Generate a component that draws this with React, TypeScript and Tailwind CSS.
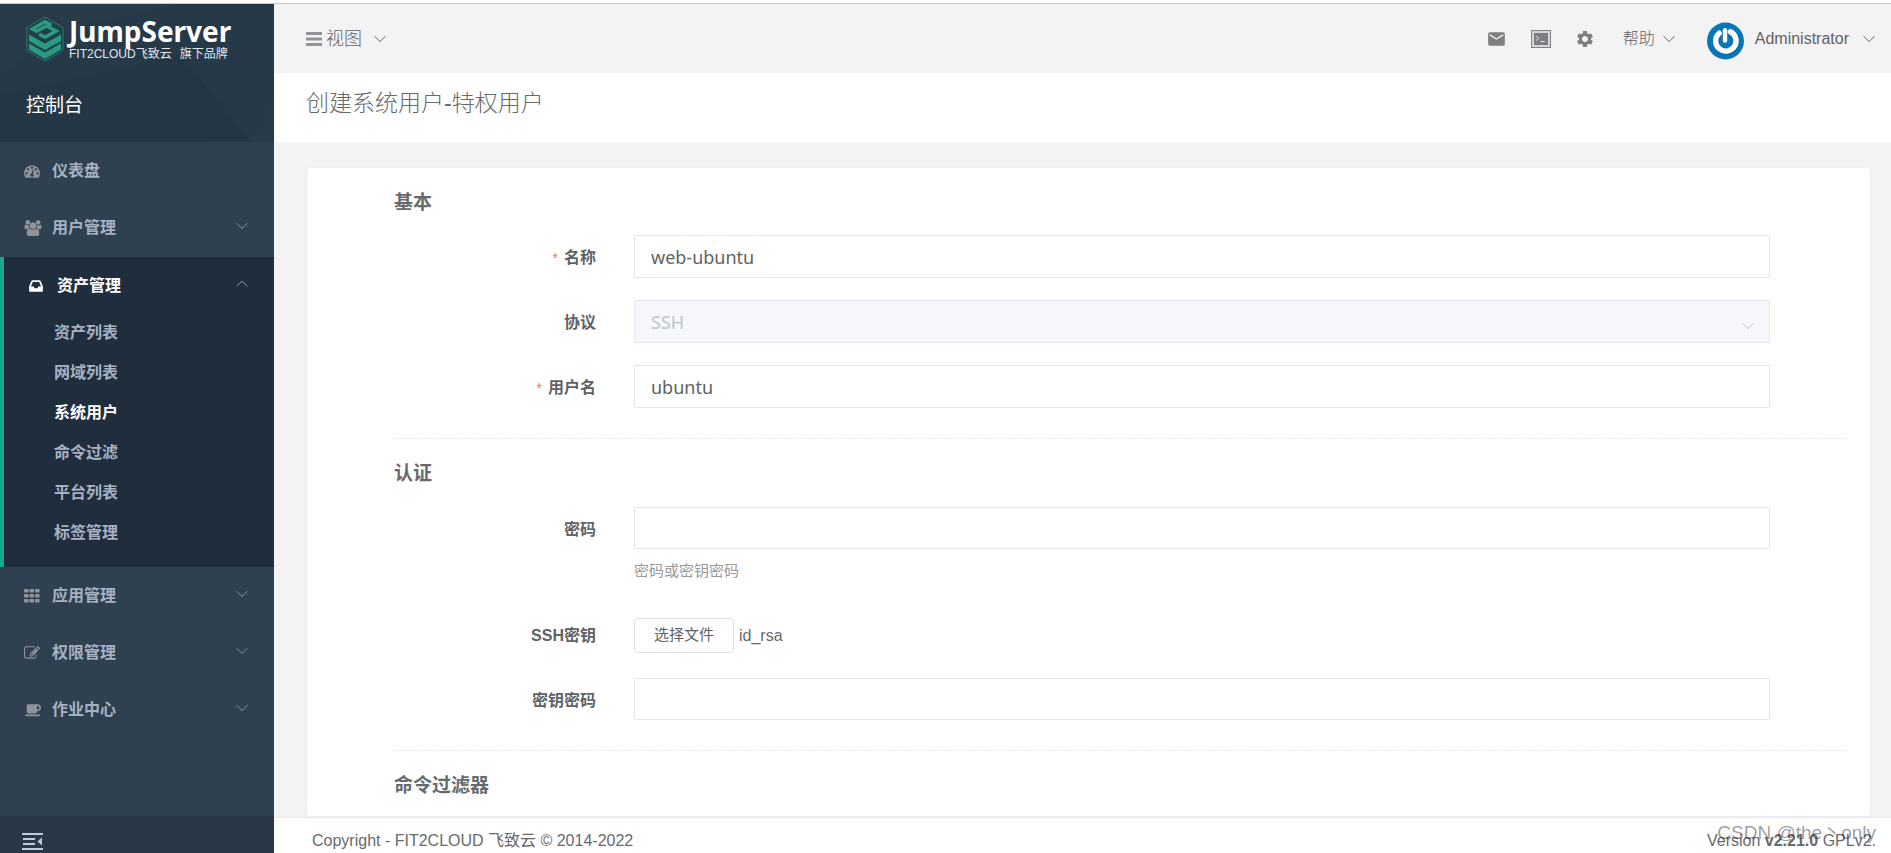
import { ReactNode, useState } from "react";
import { MdEmail, MdSettings } from "react-icons/md";

interface MenuItem {
  label: string;
  icon: ReactNode;
  hasChildren: boolean;
}

const SUB_MENU = ["资产列表", "网域列表", "系统用户", "命令过滤", "平台列表", "标签管理"];

const DashboardIcon = () => (
  <svg className="w-4 h-4" viewBox="0 0 1792 1792" fill="currentColor">
    <path d="M384 1152q0-53-37.5-90.5t-90.5-37.5-90.5 37.5-37.5 90.5 37.5 90.5 90.5 37.5 90.5-37.5 37.5-90.5zm192-448q0-53-37.5-90.5t-90.5-37.5-90.5 37.5-37.5 90.5 37.5 90.5 90.5 37.5 90.5-37.5 37.5-90.5zm428 481l101-382q6-26-7.5-48.5t-38.5-29.5-48 6.5-30 39.5l-101 382q-60 5-107 43.5t-63 98.5q-20 77 20 146t117 89 146-20 89-117q16-60-6-117t-72-91zm660-33q0-53-37.5-90.5t-90.5-37.5-90.5 37.5-37.5 90.5 37.5 90.5 90.5 37.5 90.5-37.5 37.5-90.5zm-640-640q0-53-37.5-90.5t-90.5-37.5-90.5 37.5-37.5 90.5 37.5 90.5 90.5 37.5 90.5-37.5 37.5-90.5zm448 192q0-53-37.5-90.5t-90.5-37.5-90.5 37.5-37.5 90.5 37.5 90.5 90.5 37.5 90.5-37.5 37.5-90.5zm320 448q0 261-141 483-19 29-54 29h-1402q-35 0-54-29-141-221-141-483 0-182 71-348t191-286 286-191 348-71 348 71 286 191 191 286 71 348z" />
  </svg>
);

const GroupIcon = () => (
  <svg className="w-[18px] h-4" viewBox="0 0 1920 1792" fill="currentColor">
    <path d="M593 896q-162 5-265 128h-134q-82 0-138-40.5t-56-118.5q0-353 124-353 6 0 43.5 21t97.5 42.5 119 21.5q67 0 133-23-5 37-5 66 0 139 81 256zm1071 637q0 120-73 189.5t-194 69.5h-874q-121 0-194-69.5t-73-189.5q0-53 3.5-103.5t14-109 26.5-108.5 43-97.5 62-81 85.5-53.5 111.5-20q10 0 43 21.5t73 48 107 48 135 21.5 135-21.5 107-48 73-48 43-21.5q61 0 111.5 20t85.5 53.5 62 81 43 97.5 26.5 108.5 14 109 3.5 103.5zm-1024-1277q0 106-75 181t-181 75-181-75-75-181 75-181 181-75 181 75 75 181zm704 384q0 159-112.5 271.5t-271.5 112.5-271.5-112.5-112.5-271.5 112.5-271.5 271.5-112.5 271.5 112.5 112.5 271.5zm576 225q0 78-56 118.5t-138 40.5h-134q-103-123-265-128 81-117 81-256 0-29-5-66 66 23 133 23 59 0 119-21.5t97.5-42.5 43.5-21q124 0 124 353zm-128-609q0 106-75 181t-181 75-181-75-75-181 75-181 181-75 181 75 75 181z" />
  </svg>
);

const InboxIcon = () => (
  <svg className="w-[14px] h-4" viewBox="0 0 1536 1792" fill="currentColor">
    <path d="M1023 960h316q-1-3-2.5-8t-2.5-8l-212-496h-708l-212 496q-1 2-2.5 8t-2.5 8h316l95 192h320zm513 30v482q0 26-19 45t-45 19h-1408q-26 0-45-19t-19-45v-482q0-62 25-123l238-552q10-25 36.5-42t52.5-17h832q26 0 52.5 17t36.5 42l238 552q25 61 25 123z" />
  </svg>
);

const GridIcon = () => (
  <svg className="w-4 h-4" viewBox="0 0 16 16" fill="currentColor">
    {[1, 6, 11].map((y) =>
      [0, 5.5, 11].map((x) => <rect key={`${x}-${y}`} x={x} y={y} width="4.6" height="3.6" rx="0.8" />)
    )}
  </svg>
);

const EditIcon = () => (
  <svg className="w-4 h-4" viewBox="0 0 1792 1792" fill="currentColor">
    <path d="M888 1184l116-116-152-152-116 116v56h96v96h56zm440-720q-16-16-33 1l-350 350q-17 17-1 33t33-1l350-350q17-17 1-33zm80 594v190q0 119-84.5 203.5t-203.5 84.5h-832q-119 0-203.5-84.5t-84.5-203.5v-832q0-119 84.5-203.5t203.5-84.5h832q63 0 117 25 15 7 18 23 3 17-9 29l-49 49q-14 14-32 8-23-6-45-6h-832q-66 0-113 47t-47 113v832q0 66 47 113t113 47h832q66 0 113-47t47-113v-126q0-13 9-22l64-64q15-15 35-7t20 29zm-96-738l288 288-672 672h-288v-288zm444 132l-92 92-288-288 92-92q28-28 68-28t68 28l152 152q28 28 28 68t-28 68z" />
  </svg>
);

const CoffeeIcon = () => (
  <svg className="w-[18px] h-4" viewBox="0 0 1920 1792" fill="currentColor">
    <path d="M1664 640q0-80-56-136t-136-56h-64v384h64q80 0 136-56t56-136zm-1600 768h1700q0 106-75 150t-181 42h-1180q-106 0-189-42t-75-150zm1792-768q0 159-112.500 271.500t-271.500 112.500h-64v32q0 92-66 158t-158 66h-704q-92 0-158-66t-66-158v-736q0-26 19-45t45-19h1152q159 0 271.500 112.500t112.500 271.500z" />
  </svg>
);

const Chevron = ({ up = false }: { up?: boolean }) => (
  <svg className="w-3 h-2 shrink-0" viewBox="0 0 12 8" fill="none" stroke="currentColor" strokeWidth="1">
    <path d={up ? "M0.5 6.5L6 1.2l5.5 5.3" : "M0.5 1.2L6 6.5l5.5-5.3"} />
  </svg>
);

const TOP_MENU: MenuItem[] = [
  { label: "仪表盘", icon: <DashboardIcon />, hasChildren: false },
  { label: "用户管理", icon: <GroupIcon />, hasChildren: true },
];

const BOTTOM_MENU: MenuItem[] = [
  { label: "应用管理", icon: <GridIcon />, hasChildren: true },
  { label: "权限管理", icon: <EditIcon />, hasChildren: true },
  { label: "作业中心", icon: <CoffeeIcon />, hasChildren: true },
];

function Logo() {
  return (
    <a href="#" className="flex items-center gap-[5px] text-white">
      <svg className="w-[38px] h-[46px] shrink-0" viewBox="0 0 38 46">
        <path d="M19 1L37 11.5v23L19 45 1 34.500V11.500z" fill="#213f49" stroke="#2a7a6d" strokeWidth="1" />
        <path d="M25.500 9L19 5.800 6.500 13l4 2.300L20.500 10l9.500 5-11 6.300-6-3.300" fill="none" stroke="#2a9a80" strokeWidth="3.600" />
        <g fill="#2a9a80">
          <path d="M3 18.500L19 27.500l16-9v6.500L19 34 3 25z" />
          <path d="M3 27.500L19 36.500l16-9v6L19 43 3 33.500z" />
        </g>
      </svg>
      <div className="flex flex-col">
        <span className="font-['Noto_Sans'] font-bold text-[28px] leading-7">JumpServer</span>
        <span className="mt-px flex gap-2 text-[12px] leading-4 whitespace-nowrap text-gray-200">
          <span>FIT2CLOUD飞致云</span>
          <span>旗下品牌</span>
        </span>
      </div>
    </a>
  );
}

function MenuRow({ item }: { item: MenuItem }) {
  return (
    <li>
      <a href="#" className="h-[57px] pl-6 pr-[26px] flex items-center text-[#a7b1c2]">
        <span className="w-7 text-[#909399]">{item.icon}</span>
        <span className="flex-1 font-bold text-base">{item.label}</span>
        {item.hasChildren && <span className="pb-1 text-[#909399]"><Chevron /></span>}
      </a>
    </li>
  );
}

function Sidebar() {
  return (
    <aside className="w-[274px] shrink-0 flex flex-col bg-[#2f4050]">
      <div className="relative h-[138px] bg-[#263949] overflow-hidden">
        <svg className="absolute inset-0 w-full h-full" viewBox="0 0 274 138" preserveAspectRatio="none">
          <path d="M0 0h180L80 22 0 70z" fill="#283b4b" />
          <path d="M135 62l82 76H0V90z" fill="#253746" />
          <path d="M135 62l82 76h34L180 50z" fill="#243544" />
          <path d="M251 138l23-50v50z" fill="#283a49" />
        </svg>
        <div className="relative pt-3 pl-[26px] flex flex-col">
          <Logo />
          <h2 className="mt-[30px] text-[19px] leading-7 text-white">控制台</h2>
        </div>
      </div>

      <nav className="flex-1">
        <ul>
          {TOP_MENU.map((item) => (
            <MenuRow key={item.label} item={item} />
          ))}
        </ul>
        <div className="mt-px border-l-4 border-[#19aa8d] bg-[#202d3d] pb-[14px]">
          <a href="#" className="h-14 pt-0.5 pl-[25px] pr-[26px] flex items-center text-white">
            <span className="w-7"><InboxIcon /></span>
            <span className="flex-1 font-bold text-base">资产管理</span>
            <span className="pb-1 text-[#909399]"><Chevron up /></span>
          </a>
          <ul>
            {SUB_MENU.map((label) => (
              <li key={label}>
                <a
                  href="#"
                  className={`h-10 pl-[50px] flex items-center font-bold text-base ${label === "系统用户" ? "text-white" : "text-[#a7b1c2]"}`}
                >
                  {label}
                </a>
              </li>
            ))}
          </ul>
        </div>
        <ul>
          {BOTTOM_MENU.map((item) => (
            <MenuRow key={item.label} item={item} />
          ))}
        </ul>
      </nav>

      <div className="h-[37px] shrink-0 bg-[#293846] pl-[22px] pt-4">
        <button aria-label="收起菜单" className="block text-[#bfcbd9]">
          <svg className="w-[21px] h-[18px]" viewBox="0 0 21 18" fill="currentColor">
            <rect x="0" y="1" width="21" height="2" />
            <rect x="1" y="6" width="12" height="2" />
            <rect x="1" y="11" width="12" height="2" />
            <rect x="0" y="16" width="21" height="2" />
            <path d="M20 5.500v8L15.500 9.500z" />
          </svg>
        </button>
      </div>
    </aside>
  );
}

function Header() {
  return (
    <header className="h-[69px] shrink-0 bg-[#f3f3f3] pl-8 pr-4 flex items-center justify-between text-[#606266]">
      <button className="flex items-center text-lg">
        <svg className="w-4 h-[14px] mr-1 text-[#909399]" viewBox="0 0 16 14" fill="currentColor">
          <rect y="0" width="16" height="3" rx="0.5" />
          <rect y="5.500" width="16" height="3" rx="0.5" />
          <rect y="11" width="16" height="3" rx="0.5" />
        </svg>
        <span className="mr-3 font-light">视图</span>
        <Chevron />
      </button>

      <div className="flex items-center text-base">
        <button aria-label="邮件" className="mr-6 text-[#7c7e81]"><MdEmail className="w-[21px] h-5" /></button>
        <button aria-label="终端" className="mr-6">
          <svg className="w-5 h-[18px]" viewBox="0 0 20 18">
            <rect x="0.5" y="0.5" width="19" height="17" fill="#d4d5d6" stroke="#7f8184" />
            <rect x="3" y="3" width="14" height="12" fill="#7c7e81" />
            <path d="M5 6l2.800 2.300L5 10.600M9.500 11.500h4" fill="none" stroke="#e6e6e6" strokeWidth="1" />
          </svg>
        </button>
        <button aria-label="设置" className="mr-7 text-[#7c7e81]"><MdSettings className="w-5 h-5" /></button>
        <button className="flex items-center mr-8">
          <span className="mr-2 font-light">帮助</span>
          <Chevron />
        </button>
        <button className="flex items-center">
          <svg className="w-[37px] h-[38px] mr-[11px] mt-1" viewBox="0 0 38 38">
            <circle cx="19" cy="19" r="19" fill="#0a76ba" />
            <path d="M12.500 12.500a10.500 10.500 0 1 0 12.500-1.500" fill="none" stroke="#0861a0" strokeWidth="7" strokeLinecap="round" opacity="0.4" />
            <path d="M12.500 11a10.500 10.500 0 1 0 11.500-1.500" fill="none" stroke="#fff" strokeWidth="5.500" strokeLinecap="round" />
            <path d="M18.500 8v10.500" fill="none" stroke="#fff" strokeWidth="4.500" strokeLinecap="round" />
          </svg>
          <span className="mr-3.5">Administrator</span>
          <Chevron />
        </button>
      </div>
    </header>
  );
}

interface FieldProps {
  id: string;
  label: string;
  required?: boolean;
  children: ReactNode;
}

function Field({ id, label, required, children }: FieldProps) {
  return (
    <div className="flex items-start pr-[76px]">
      <label htmlFor={id} className="w-60 shrink-0 pr-[38px] pt-[11px] text-right text-base leading-6 font-bold text-[#606266]">
        {required && <span className="mr-1.5 font-normal text-sm text-[#f56c6c]">*</span>}
        {label}
      </label>
      <div className="flex-1 min-w-0">{children}</div>
    </div>
  );
}

const inputClass =
  "block w-full px-4 border border-[#e5e6e7] rounded-[1px] bg-white font-['Noto_Sans','Noto_Sans_CJK_SC',sans-serif] text-lg text-[#606266] outline-none";

const headingClass = "text-[19px] leading-7 font-bold text-[#676a6c]";

export default function App() {
  const [name, setName] = useState("web-ubuntu");
  const [username, setUsername] = useState("ubuntu");
  const [password, setPassword] = useState("");
  const [passphrase, setPassphrase] = useState("");

  return (
    <div className="relative h-screen flex flex-col overflow-hidden bg-white font-['Liberation_Sans','Noto_Sans_CJK_SC',sans-serif]">
      <div className="h-1 shrink-0 border-b border-[#c8c8c8]" />
      <div className="flex-1 min-h-0 flex">
        <Sidebar />

        <div className="flex-1 min-w-0 flex flex-col">
          <Header />
          <div className="h-[69px] shrink-0 bg-white pl-8 pt-3">
            <h1 className="text-[23px] leading-9 font-light text-[#676a6c]">创建系统用户-特权用户</h1>
          </div>

          <main className="flex-1 min-h-0 overflow-hidden bg-[#f3f3f3] pt-[25px] pl-8 pr-5">
            <form className="min-h-full bg-white border border-[#ebeef5] rounded pt-[21px] pl-[87px] pr-6">
              <section>
                <h3 className={headingClass}>基本</h3>
                <div className="mt-[18px] flex flex-col gap-[22px]">
                  <Field id="name" label="名称" required>
                    <input id="name" className={`${inputClass} h-[43px]`} value={name} onChange={(e) => setName(e.target.value)} />
                  </Field>
                  <Field id="protocol" label="协议">
                    <div className="relative">
                      <select
                        id="protocol"
                        disabled
                        className="block appearance-none w-full h-[43px] px-4 border border-[#e4e7ed] rounded-[1px] bg-[#f5f7fa] font-['Noto_Sans','Noto_Sans_CJK_SC',sans-serif] text-lg text-[#c0c4cc] opacity-100"
                      >
                        <option>SSH</option>
                      </select>
                      <span className="absolute right-4 top-1/2 text-[#c0c4cc]"><Chevron /></span>
                    </div>
                  </Field>
                  <Field id="username" label="用户名" required>
                    <input id="username" className={`${inputClass} h-[43px]`} value={username} onChange={(e) => setUsername(e.target.value)} />
                  </Field>
                </div>
              </section>

              <section className="mt-[30px] border-t border-dashed border-[#e7eaec] pt-[21px]">
                <h3 className={headingClass}>认证</h3>
                <div className="mt-[19px] flex flex-col">
                  <Field id="password" label="密码">
                    <input id="password" type="password" className={`${inputClass} h-[42px]`} value={password} onChange={(e) => setPassword(e.target.value)} />
                    <p className="mt-2.5 text-[15px] leading-6 text-[#999999]">密码或密钥密码</p>
                  </Field>
                  <div className="mt-[30px]">
                    <Field id="ssh-key" label="SSH密钥">
                      <div className="pt-[5px] flex items-center gap-[5px]">
                        <button id="ssh-key" type="button" className="w-[100px] h-[35px] border border-[#dcdfe6] rounded text-[15px] text-[#606266] bg-white">
                          选择文件
                        </button>
                        <span className="text-base text-[#676a6c]">id_rsa</span>
                      </div>
                    </Field>
                  </div>
                  <div className="mt-[25px]">
                    <Field id="passphrase" label="密钥密码">
                      <input id="passphrase" type="password" className={`${inputClass} h-[42px]`} value={passphrase} onChange={(e) => setPassphrase(e.target.value)} />
                    </Field>
                  </div>
                </div>
              </section>

              <section className="mt-[30px] border-t border-dashed border-[#e7eaec] pt-[21px]">
                <h3 className={headingClass}>命令过滤器</h3>
              </section>
            </form>
          </main>

          <footer className="h-9 shrink-0 border-t border-[#e7eaec] bg-white pt-[11px] pl-[38px] pr-[15px] flex justify-between text-base leading-6 text-[#676a6c]">
            <span>Copyright - FIT2CLOUD 飞致云 © 2014-2022</span>
            <span>Version <strong>v2.21.0</strong> GPLv2.</span>
          </footer>
        </div>
      </div>

      <span className="absolute right-[15px] bottom-1.5 text-[19px] leading-7 text-black/40">CSDN @the丶only</span>
    </div>
  );
}
